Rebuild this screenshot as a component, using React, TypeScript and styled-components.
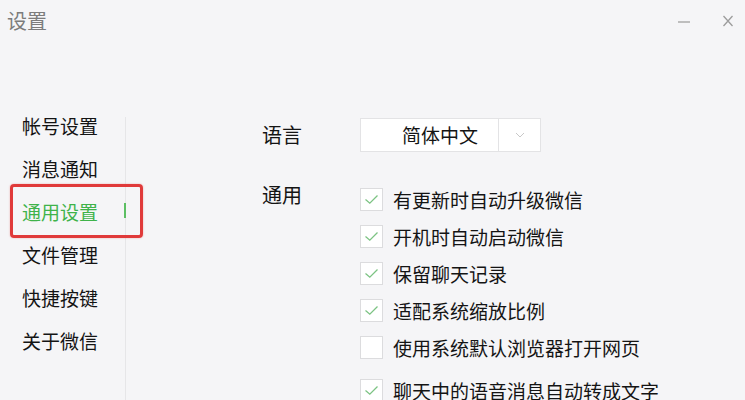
import React from "react";
import styled, { createGlobalStyle } from "styled-components";

const GlobalStyle = createGlobalStyle`
  html, body {
    margin: 0;
    padding: 0;
    background: #f5f5f7;
    font-family: "Noto Sans CJK SC", "Noto Sans", sans-serif;
  }
  * { box-sizing: border-box; }
`;

const Window = styled.div`
  width: 745px;
  height: 400px;
  overflow: hidden;
  background: #f5f5f7;
  display: flex;
  flex-direction: column;
`;

const TitleBar = styled.div`
  height: 42px;
  display: flex;
  align-items: center;
  padding: 0 0 0 7px;
`;

const Title = styled.div`
  flex: 1;
  font-size: 20px;
  color: #7c7c7c;
  line-height: 42px;
  margin-top: -1px;
`;

const WinButton = styled.button<{ $w: number }>`
  width: ${(p) => p.$w}px;
  height: 42px;
  border: none;
  background: transparent;
  padding: 0;
  display: flex;
  align-items: center;
  justify-content: center;
`;

const Main = styled.div`
  flex: 1;
  display: flex;
`;

const Sidebar = styled.div`
  width: 126px;
  display: flex;
  padding-top: 62px;
`;

const NavList = styled.div`
  width: 125px;
  display: flex;
  flex-direction: column;
`;

const Divider = styled.div`
  width: 1px;
  margin-top: 13px;
  background: #e6e6e8;
`;

const NavItem = styled.div<{ $active?: boolean }>`
  position: relative;
  height: 43px;
  line-height: 43px;
  padding-left: 22px;
  font-size: 19px;
  color: ${(p) => (p.$active ? "#3fb34a" : "#141414")};
`;

const ActiveMark = styled.span`
  position: absolute;
  right: -1px;
  top: 13px;
  width: 2px;
  height: 15px;
  background: #5cbf63;
`;

const Highlight = styled.span`
  position: absolute;
  left: 10px;
  right: -18px;
  top: -6px;
  bottom: -5px;
  border: 3px solid #e03a3a;
  border-radius: 4px;
  box-shadow: 0 0 2px rgba(224, 58, 58, 0.4);
  pointer-events: none;
`;

const Content = styled.div`
  flex: 1;
  padding: 76px 0 0 136px;
  display: flex;
  flex-direction: column;
`;

const Row = styled.div<{ $align?: string; $mb?: number }>`
  display: flex;
  align-items: ${(p) => p.$align || "center"};
  margin-bottom: ${(p) => p.$mb || 0}px;
`;

const Label = styled.div`
  width: 98px;
  font-size: 20px;
  line-height: 24px;
  color: #141414;
`;

const Select = styled.div`
  width: 181px;
  height: 34px;
  display: flex;
  background: #fff;
  border: 1px solid #e3e3e5;
`;

const SelectValue = styled.div`
  width: 138px;
  padding-left: 41px;
  font-size: 19px;
  line-height: 32px;
  color: #141414;
  border-right: 1px solid #e3e3e5;
`;

const SelectArrow = styled.div`
  flex: 1;
  display: flex;
  align-items: center;
  justify-content: center;
`;

const Options = styled.div`
  display: flex;
  flex-direction: column;
  gap: 14px;
  padding-top: 5px;
`;

const Option = styled.div<{ $gapTop?: number }>`
  display: flex;
  align-items: center;
  height: 23px;
  margin-top: ${(p) => p.$gapTop || 0}px;
`;

const Box = styled.span`
  width: 23px;
  height: 23px;
  background: #fff;
  border: 1px solid #dcdcde;
  display: flex;
  align-items: center;
  justify-content: center;
  margin-right: 10px;
  flex-shrink: 0;
`;

const OptionText = styled.span`
  font-size: 19px;
  line-height: 23px;
  color: #141414;
  white-space: nowrap;
`;

const Check = () => (
  <svg width="15" height="11" viewBox="0 0 15 11">
    <path d="M1.5 5.5 L5.8 9.2 L13.5 1.5" fill="none" stroke="#7cc383" strokeWidth="1.3" />
  </svg>
);

const navItems = ["帐号设置", "消息通知", "通用设置", "文件管理", "快捷按键", "关于微信"];

const options: { text: string; checked: boolean; gapTop?: number }[] = [
  { text: "有更新时自动升级微信", checked: true },
  { text: "开机时自动启动微信", checked: true },
  { text: "保留聊天记录", checked: true },
  { text: "适配系统缩放比例", checked: true },
  { text: "使用系统默认浏览器打开网页", checked: false },
  { text: "聊天中的语音消息自动转成文字", checked: true, gapTop: 6 },
];

export default function App() {
  return (
    <Window>
      <GlobalStyle />
      <TitleBar>
        <Title>设置</Title>
        <WinButton $w={54} aria-label="minimize">
          <svg width="14" height="12" viewBox="0 0 14 12">
            <path d="M1 7 H13" stroke="#a0a0a0" strokeWidth="1.3" />
          </svg>
        </WinButton>
        <WinButton $w={34} aria-label="close">
          <svg width="14" height="14" viewBox="0 0 14 14">
            <path d="M2.5 2 L11.5 12 M11.5 2 L2.5 12" stroke="#9c9c9c" strokeWidth="1.3" />
          </svg>
        </WinButton>
      </TitleBar>
      <Main>
        <Sidebar>
          <NavList>
            {navItems.map((t) => (
              <NavItem key={t} $active={t === "通用设置"}>
                {t}
                {t === "通用设置" && (
                  <>
                    <ActiveMark />
                    <Highlight />
                  </>
                )}
              </NavItem>
            ))}
          </NavList>
          <Divider />
        </Sidebar>
        <Content>
          <Row $mb={31}>
            <Label>语言</Label>
            <Select>
              <SelectValue>简体中文</SelectValue>
              <SelectArrow>
                <svg width="10" height="6" viewBox="0 0 10 6">
                  <path d="M1 1 L5 5 L9 1" fill="none" stroke="#c8c8c8" strokeWidth="1" />
                </svg>
              </SelectArrow>
            </Select>
          </Row>
          <Row $align="flex-start">
            <Label>通用</Label>
            <Options>
              {options.map((o) => (
                <Option key={o.text} $gapTop={o.gapTop}>
                  <Box>{o.checked && <Check />}</Box>
                  <OptionText>{o.text}</OptionText>
                </Option>
              ))}
            </Options>
          </Row>
        </Content>
      </Main>
    </Window>
  );
}
